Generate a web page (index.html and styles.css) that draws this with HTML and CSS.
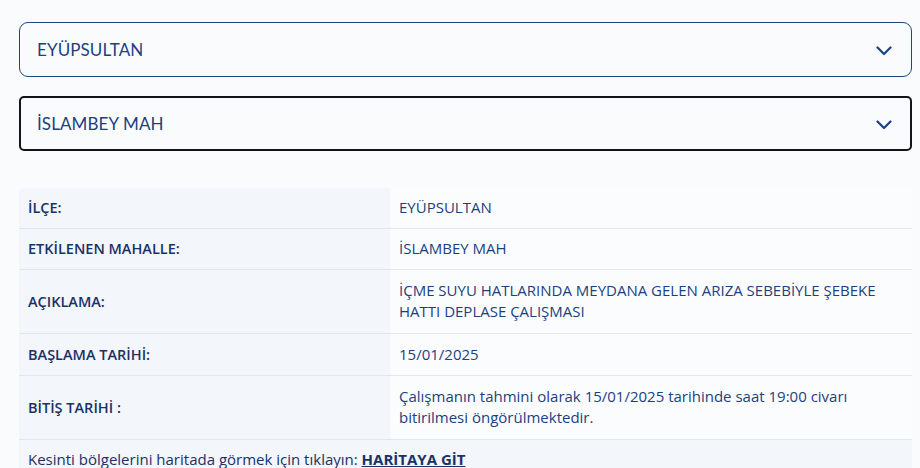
FILE: index.html
```html
<!DOCTYPE html>
<html lang="tr">
<head>
<meta charset="utf-8">
<link rel="stylesheet" href="styles.css">
</head>
<body>
<div class="page">
  <div class="select select-a">
    <span class="select-text">EYÜPSULTAN</span>
    <svg class="chev" width="16" height="10" viewBox="0 0 16 10"><path d="M1.5 1.5 L8 8 L14.5 1.5" fill="none" stroke="#1a4382" stroke-width="2.2" stroke-linecap="round" stroke-linejoin="round"/></svg>
  </div>
  <div class="select select-b">
    <span class="select-text">İSLAMBEY MAH</span>
    <svg class="chev" width="16" height="10" viewBox="0 0 16 10"><path d="M1.5 1.5 L8 8 L14.5 1.5" fill="none" stroke="#1a4382" stroke-width="2.2" stroke-linecap="round" stroke-linejoin="round"/></svg>
  </div>
  <table class="info">
    <tr class="r1"><th>İLÇE:</th><td>EYÜPSULTAN</td></tr>
    <tr class="r1"><th>ETKİLENEN MAHALLE:</th><td>İSLAMBEY MAH</td></tr>
    <tr class="r2"><th>AÇIKLAMA:</th><td>İÇME SUYU HATLARINDA MEYDANA GELEN ARIZA SEBEBİYLE ŞEBEKE HATTI DEPLASE ÇALIŞMASI</td></tr>
    <tr class="r1 r1b"><th>BAŞLAMA TARİHİ:</th><td>15/01/2025</td></tr>
    <tr class="r2"><th>BİTİŞ TARİHİ :</th><td>Çalışmanın tahmini olarak 15/01/2025 tarihinde saat 19:00 civarı bitirilmesi öngörülmektedir.</td></tr>
    <tr class="foot"><td colspan="2">Kesinti bölgelerini haritada görmek için tıklayın: <a class="maplink" href="#">HARİTAYA GİT</a></td></tr>
  </table>
</div>
</body>
</html>
```

FILE: styles.css
```css
* { box-sizing: border-box; }
html, body { margin: 0; padding: 0; }
body {
  background: #f9fbfd;
  font-family: "Lato", "Noto Sans", sans-serif;
  color: #1b3e7c;
  overflow: hidden;
}
.page {
  padding: 22px 8px 0 19px;
  display: flex;
  flex-direction: column;
}
.select {
  height: 55px;
  display: flex;
  align-items: center;
  justify-content: space-between;
  padding: 0 19px 0 17px;
  background: #fafbfd;
}
.select-a {
  border: 1px solid #1d4580;
  border-radius: 9px;
}
.select-b {
  margin-top: 19px;
  border: 2px solid #121417;
  border-radius: 5px;
  padding-left: 16px;
  padding-right: 18px;
}
.select-text {
  font-size: 17px;
  color: #1b3f80;
  letter-spacing: 0.1px;
}
.chev { display: block; margin-top: 2px; }
.info {
  margin-top: 37px;
  width: 893px;
  border-collapse: collapse;
  font-family: "Open Sans", "Lato", sans-serif;
  font-size: 15px;
  line-height: 21px;
}
.info th, .info td {
  text-align: left;
  vertical-align: middle;
  border-bottom: 1px solid #e3e7ec;
  padding: 9px 9px 10px 9px;
}
.info th {
  width: 371px;
  background: #f3f6fa;
  color: #1a3266;
  font-weight: 600;
  font-size: 14.5px;
}
.info td {
  background: #fbfcfe;
  color: #1b3f80;
  font-weight: 400;
}
.info tr.r1b th, .info tr.r1b td { padding-top: 10px; }
.info tr.r2 th, .info tr.r2 td { padding-top: 10px; padding-bottom: 11px; }
.info tr:first-child th { border-top-left-radius: 6px; }
.info tr.foot td {
  background: #f3f6fa;
  color: #1a3266;
  border-bottom: none;
  padding-top: 9px;
  font-size: 15px;
}
.maplink {
  color: #1a3266;
  font-weight: 700;
  text-decoration: underline;
}
```
